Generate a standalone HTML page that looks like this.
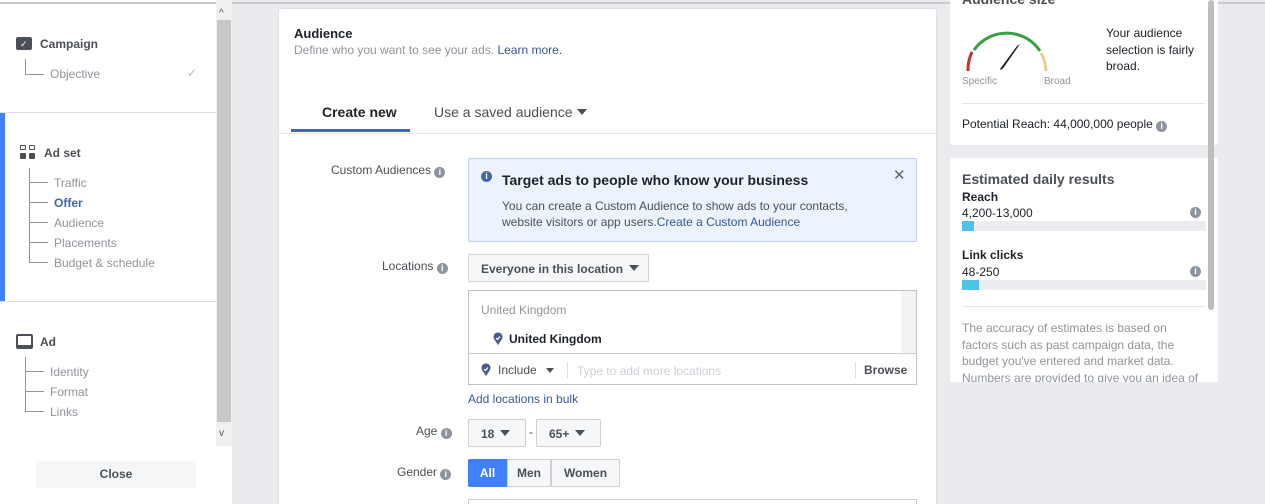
<!DOCTYPE html>
<html><head><style>
*{box-sizing:border-box;margin:0;padding:0}
html,body{width:1265px;height:504px;overflow:hidden}
body{background:#e9ebee;font-family:"Liberation Sans",Arial,sans-serif;font-size:12px;color:#4b4f56;position:relative}
.a{position:absolute;white-space:nowrap}
.side{left:0;top:0;width:232px;height:504px;background:#fff}
.sb{left:216px;top:0;width:16px;height:446px;background:#f0f0f0}
.sbt{left:217px;top:20px;width:14px;height:402px;background:#c8c8c8}
.topline{left:0;top:2px;width:1265px;height:2px;background:#c9c9c9}
.gray{color:#90949c}
.line{background:#90949c}
.info{display:inline-block;width:11px;height:11px;border-radius:50%;background:#8d949e;color:#fff;font-size:9px;font-weight:bold;text-align:center;line-height:11px;vertical-align:-1px}
.btn{background:#f6f7f9;border:1px solid #ced0d4;border-radius:2px;color:#4b4f56;font-weight:bold;font-size:12px}
.tri{display:inline-block;width:0;height:0;border-left:5px solid transparent;border-right:5px solid transparent;border-top:6px solid #4b4f56;vertical-align:2px;margin-left:6px}
</style></head><body>
<div class="a side"></div>
<div class="a topline"></div>
<div class="a sb"></div><div class="a sbt"></div>
<div class="a" style="left:219px;top:8px;font-size:10px;color:#555">^</div>
<div class="a" style="left:219px;top:428px;font-size:10px;color:#555">v</div>

<div class="a" style="left:16px;top:37px;width:16px;height:13px;background:#4b4f56;border-radius:2px"></div>
<div class="a" style="left:20px;top:39px;color:#fff;font-size:9px">✓</div>
<div class="a" style="left:40px;top:37px;font-weight:bold;color:#4b4f56">Campaign</div>
<div class="a line" style="left:25px;top:59px;width:1px;height:16px"></div>
<div class="a line" style="left:25px;top:74px;width:19px;height:1px"></div>
<div class="a gray" style="left:50px;top:67px">Objective</div>
<div class="a" style="left:187px;top:66px;color:#bbb">✓</div>
<div class="a" style="left:0;top:112px;width:216px;height:1px;background:#dddfe2"></div>

<div class="a" style="left:0;top:113px;width:5px;height:188px;background:#4080ff"></div>
<div class="a" style="left:20px;top:145px;width:6px;height:5px;border:1.5px solid #4b4f56;border-radius:1px"></div>
<div class="a" style="left:29px;top:145px;width:6px;height:5px;border:1.5px solid #4b4f56;border-radius:1px"></div>
<div class="a" style="left:20px;top:153px;width:6px;height:6px;background:#4b4f56;border-radius:1px"></div>
<div class="a" style="left:29px;top:153px;width:6px;height:6px;background:#4b4f56;border-radius:1px"></div>
<div class="a" style="left:44px;top:146px;font-weight:bold">Ad set</div>
<div class="a line" style="left:29px;top:168px;width:1px;height:95px"></div>
<div class="a line" style="left:29px;top:182px;width:19px;height:1px"></div>
<div class="a line" style="left:29px;top:202px;width:19px;height:1px"></div>
<div class="a line" style="left:29px;top:222px;width:19px;height:1px"></div>
<div class="a line" style="left:29px;top:242px;width:19px;height:1px"></div>
<div class="a line" style="left:29px;top:262px;width:19px;height:1px"></div>
<div class="a gray" style="left:54px;top:176px">Traffic</div>
<div class="a" style="left:54px;top:196px;color:#4267b2;font-weight:bold">Offer</div>
<div class="a gray" style="left:54px;top:216px">Audience</div>
<div class="a gray" style="left:54px;top:236px">Placements</div>
<div class="a gray" style="left:54px;top:256px">Budget &amp; schedule</div>
<div class="a" style="left:0;top:301px;width:216px;height:1px;background:#dddfe2"></div>

<div class="a" style="left:16px;top:334px;width:17px;height:15px;border:2px solid #4b4f56;border-radius:2px"></div>
<div class="a" style="left:18px;top:345px;width:13px;height:2px;background:#4b4f56"></div>
<div class="a" style="left:40px;top:335px;font-weight:bold">Ad</div>
<div class="a line" style="left:25px;top:357px;width:1px;height:55px"></div>
<div class="a line" style="left:25px;top:371px;width:19px;height:1px"></div>
<div class="a line" style="left:25px;top:391px;width:19px;height:1px"></div>
<div class="a line" style="left:25px;top:411px;width:19px;height:1px"></div>
<div class="a gray" style="left:50px;top:365px">Identity</div>
<div class="a gray" style="left:50px;top:385px">Format</div>
<div class="a gray" style="left:50px;top:405px">Links</div>
<div class="a" style="left:36px;top:461px;width:160px;height:27px;background:#f5f6f7;border-radius:3px;text-align:center;line-height:27px;font-weight:bold;color:#4b4f56">Close</div>

<div class="a" style="left:278px;top:8px;width:659px;height:500px;background:#fff;border:1px solid #dddfe2;border-radius:3px"></div>
<div class="a" style="left:294px;top:26px;font-size:13px;font-weight:bold;color:#1d2129">Audience</div>
<div class="a gray" style="left:294px;top:43px">Define who you want to see your ads. <span style="color:#365899">Learn more.</span></div>
<div class="a" style="left:322px;top:104px;font-size:14px;font-weight:bold;color:#1d2129">Create new</div>
<div class="a" style="left:291px;top:129px;width:119px;height:3px;background:#4267b2"></div>
<div class="a" style="left:434px;top:104px;font-size:14px;color:#4b4f56">Use a saved audience<span class="tri" style="margin-left:4px"></span></div>
<div class="a" style="left:279px;top:133px;width:657px;height:1px;background:#e5e5e5"></div>

<div class="a" style="left:331px;top:163px">Custom Audiences <span class="info">i</span></div>
<div class="a" style="left:468px;top:158px;width:449px;height:84px;background:#ecf3ff;border:1px solid #bfd0ea;border-radius:2px"></div>
<div class="a" style="left:481px;top:171px;width:11px;height:11px;border-radius:50%;background:#4267b2;color:#fff;font-size:9px;font-weight:bold;text-align:center;line-height:11px">i</div>
<div class="a" style="left:502px;top:172px;font-size:14px;font-weight:bold;color:#1d2129">Target ads to people who know your business</div>
<div class="a" style="left:893px;top:166px;font-size:15px;color:#606770">✕</div>
<div class="a" style="left:502px;top:198px;line-height:16px;color:#4b4f56">You can create a Custom Audience to show ads to your contacts,<br>website visitors or app users.<span style="color:#365899">Create a Custom Audience</span></div>

<div class="a" style="left:382px;top:259px">Locations <span class="info">i</span></div>
<div class="a btn" style="left:468px;top:254px;width:181px;height:28px;padding:7px 12px">Everyone in this location<span class="tri"></span></div>
<div class="a" style="left:468px;top:290px;width:449px;height:95px;border:1px solid #bec3c9"></div>
<div class="a" style="left:901px;top:291px;width:15px;height:62px;background:#f3f3f3"></div>
<div class="a" style="left:469px;top:353px;width:447px;height:1px;background:#ccd0d5"></div>
<div class="a gray" style="left:481px;top:303px">United Kingdom</div>
<svg class="a" style="left:493px;top:332px" width="10" height="13" viewBox="0 0 10 13"><path d="M5 13 L1 7 A4.5 4.5 0 1 1 9 7 Z" fill="#4a5a8c"/><path d="M3 6 L4.5 7.5 L7 4.5" stroke="#fff" stroke-width="1.2" fill="none"/></svg>
<div class="a" style="left:509px;top:332px;font-weight:bold;color:#1d2129">United Kingdom</div>
<svg class="a" style="left:481px;top:363px" width="10" height="13" viewBox="0 0 10 13"><path d="M5 13 L1 7 A4.5 4.5 0 1 1 9 7 Z" fill="#4a5a8c"/><path d="M3 6 L4.5 7.5 L7 4.5" stroke="#fff" stroke-width="1.2" fill="none"/></svg>
<div class="a" style="left:498px;top:363px;color:#4b4f56">Include</div>
<div class="a" style="left:546px;top:368px;border-left:4px solid transparent;border-right:4px solid transparent;border-top:5px solid #4b4f56"></div>
<div class="a" style="left:567px;top:362px;width:1px;height:16px;background:#ddd"></div>
<div class="a" style="left:577px;top:364px;color:#ccd0d5">Type to add more locations</div>
<div class="a" style="left:855px;top:362px;width:1px;height:16px;background:#ddd"></div>
<div class="a" style="left:864px;top:363px;font-weight:bold;color:#4b4f56">Browse</div>
<div class="a" style="left:468px;top:392px;color:#365899">Add locations in bulk</div>

<div class="a" style="left:416px;top:424px">Age <span class="info">i</span></div>
<div class="a btn" style="left:468px;top:419px;width:58px;height:28px;padding:7px 12px">18<span class="tri"></span></div>
<div class="a" style="left:529px;top:425px">-</div>
<div class="a btn" style="left:536px;top:419px;width:65px;height:28px;padding:7px 12px">65+<span class="tri"></span></div>

<div class="a" style="left:397px;top:465px">Gender <span class="info">i</span></div>
<div class="a" style="left:468px;top:459px;width:39px;height:28px;background:#4080ff;color:#fff;font-weight:bold;text-align:center;line-height:28px;border-radius:2px 0 0 2px">All</div>
<div class="a btn" style="left:507px;top:459px;width:44px;height:28px;line-height:26px;text-align:center;border-radius:0">Men</div>
<div class="a btn" style="left:551px;top:459px;width:69px;height:28px;line-height:26px;text-align:center;border-radius:0 2px 2px 0">Women</div>
<div class="a" style="left:468px;top:499px;width:449px;height:10px;border:1px solid #ccd0d5"></div>

<div class="a" style="left:950px;top:0;width:268px;height:145px;background:#fff;border-radius:0 0 3px 3px"></div>
<div class="a" style="left:962px;top:-9px;font-size:14px;font-weight:bold;color:#4b4f56">Audience size</div>
<svg class="a" style="left:962px;top:24px" width="120" height="60" viewBox="0 0 120 60">
<path d="M6 47 A40 40 0 0 1 10 28" stroke="#c9302c" stroke-width="3" fill="none"/>
<path d="M12 26 A40 40 0 0 1 78 27" stroke="#3aa040" stroke-width="3" fill="none"/>
<path d="M79 29 A40 40 0 0 1 84 47" stroke="#f0c896" stroke-width="3" fill="none"/>
<path d="M55 22 L58 20 L42 43 Q39 47 38 45 Z" fill="#1d2129"/>
</svg>
<div class="a gray" style="left:962px;top:76px;font-size:10px">Specific</div>
<div class="a gray" style="left:1044px;top:76px;font-size:10px">Broad</div>
<div class="a" style="left:1106px;top:25px;line-height:16.5px;color:#1d2129">Your audience<br>selection is fairly<br>broad.</div>
<div class="a" style="left:962px;top:103px;width:243px;height:1px;background:#e5e5e5"></div>
<div class="a" style="left:962px;top:117px;color:#1d2129">Potential Reach: 44,000,000 people <span class="info">i</span></div>

<div class="a" style="left:950px;top:158px;width:268px;height:346px;background:#fff;border-radius:3px"></div>
<div class="a" style="left:1208px;top:0;width:6px;height:310px;background:#bdbdbd;border-radius:3px"></div>
<div class="a" style="left:962px;top:171px;font-size:14px;font-weight:bold;color:#4b4f56">Estimated daily results</div>
<div class="a" style="left:962px;top:190px;font-weight:bold;color:#1d2129">Reach</div>
<div class="a" style="left:962px;top:206px;color:#1d2129">4,200-13,000</div>
<div class="a info" style="left:1190px;top:207px">i</div>
<div class="a" style="left:962px;top:221px;width:244px;height:10px;background:#ebedf0"></div>
<div class="a" style="left:962px;top:221px;width:12px;height:10px;background:#4fc3e6"></div>
<div class="a" style="left:962px;top:248px;font-weight:bold;color:#1d2129">Link clicks</div>
<div class="a" style="left:962px;top:265px;color:#1d2129">48-250</div>
<div class="a info" style="left:1190px;top:266px">i</div>
<div class="a" style="left:962px;top:280px;width:244px;height:10px;background:#ebedf0"></div>
<div class="a" style="left:962px;top:280px;width:17px;height:10px;background:#4fc3e6"></div>
<div class="a" style="left:962px;top:306px;width:243px;height:1px;background:#e5e5e5"></div>
<div class="a gray" style="left:962px;top:320px;line-height:16.5px">The accuracy of estimates is based on<br>factors such as past campaign data, the<br>budget you've entered and market data.<br>Numbers are provided to give you an idea of</div>
<div class="a" style="left:950px;top:382px;width:268px;height:122px;background:#e9ebee"></div>
</body></html>
